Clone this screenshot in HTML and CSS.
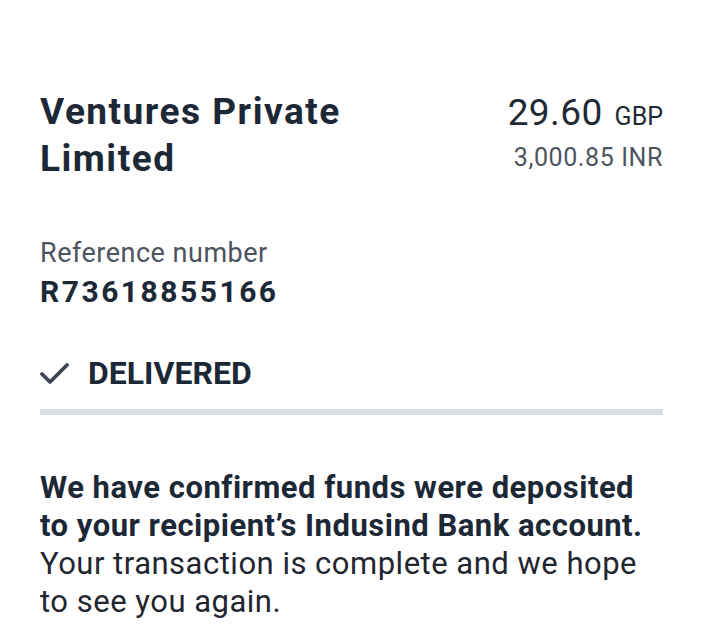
FILE: index.html
```html
<!DOCTYPE html>
<html>
<head>
<meta charset="utf-8">
<link rel="stylesheet" href="styles.css">
</head>
<body>
<main class="page">
  <section class="header">
    <h1 class="title">Ventures Private Limited</h1>
    <div class="amounts">
      <div class="amount"><span class="amount-main">29.60</span><span class="amount-cur">GBP</span></div>
      <div class="amount-sub">3,000.85 INR</div>
    </div>
  </section>
  <section class="ref">
    <div class="ref-label">Reference number</div>
    <div class="ref-value">R73618855166</div>
  </section>
  <section class="status">
    <svg class="check" width="30" height="24" viewBox="0 0 30 24"><path d="M2 13 L10 21 L27 4" fill="none" stroke="#3d4650" stroke-width="3.8" stroke-linecap="round" stroke-linejoin="round"/></svg>
    <span class="status-text">DELIVERED</span>
  </section>
  <div class="divider"></div>
  <p class="message"><strong>We have confirmed funds were deposited to your recipient’s Indusind Bank account.</strong> Your transaction is complete and we hope to see you again.</p>
</main>
</body>
</html>
```
FILE: styles.css
```css
html, body {
  margin: 0;
  padding: 0;
  background: #ffffff;
}
body {
  font-family: Roboto, "Noto Sans", sans-serif;
  color: #1d2836;
}
.page {
  padding: 86px 47px 0 40px;
}
.header {
  display: flex;
  justify-content: space-between;
  align-items: flex-start;
}
.title {
  margin: 2px 0 0 0;
  font-size: 37px;
  line-height: 47px;
  font-weight: 700;
  letter-spacing: 1.5px;
  max-width: 345px;
  color: #1d2836;
}
.amounts {
  text-align: right;
  padding-top: 3px;
}
.amount {
  line-height: 48px;
  color: #1f2a37;
}
.amount-main {
  font-size: 37px;
  letter-spacing: 0.4px;
}
.amount-cur {
  font-size: 25px;
  margin-left: 12px;
}
.amount-sub {
  margin-top: -1px;
  font-size: 25px;
  line-height: 30px;
  letter-spacing: 0.6px;
  color: #4c5460;
}
.ref {
  margin-top: 55px;
}
.ref-label {
  font-size: 27px;
  line-height: 32px;
  letter-spacing: 0.5px;
  color: #4c5460;
}
.ref-value {
  margin-top: 5px;
  font-size: 30px;
  line-height: 36px;
  font-weight: 700;
  letter-spacing: 2.5px;
}
.status {
  margin-top: 43px;
  display: flex;
  align-items: center;
  gap: 18px;
  height: 40px;
}
.check {
  flex: none;
}
.status-text {
  font-size: 32px;
  line-height: 40px;
  font-weight: 700;
  color: #1d2836;
}
.divider {
  margin-top: 16px;
  height: 6px;
  background: #d9dde5;
}
.message {
  margin: 54px 0 0 0;
  font-size: 31px;
  line-height: 38px;
  letter-spacing: 0.5px;
  color: #1f2630;
}
.message strong {
  font-weight: 700;
  color: #1d2836;
}
```
